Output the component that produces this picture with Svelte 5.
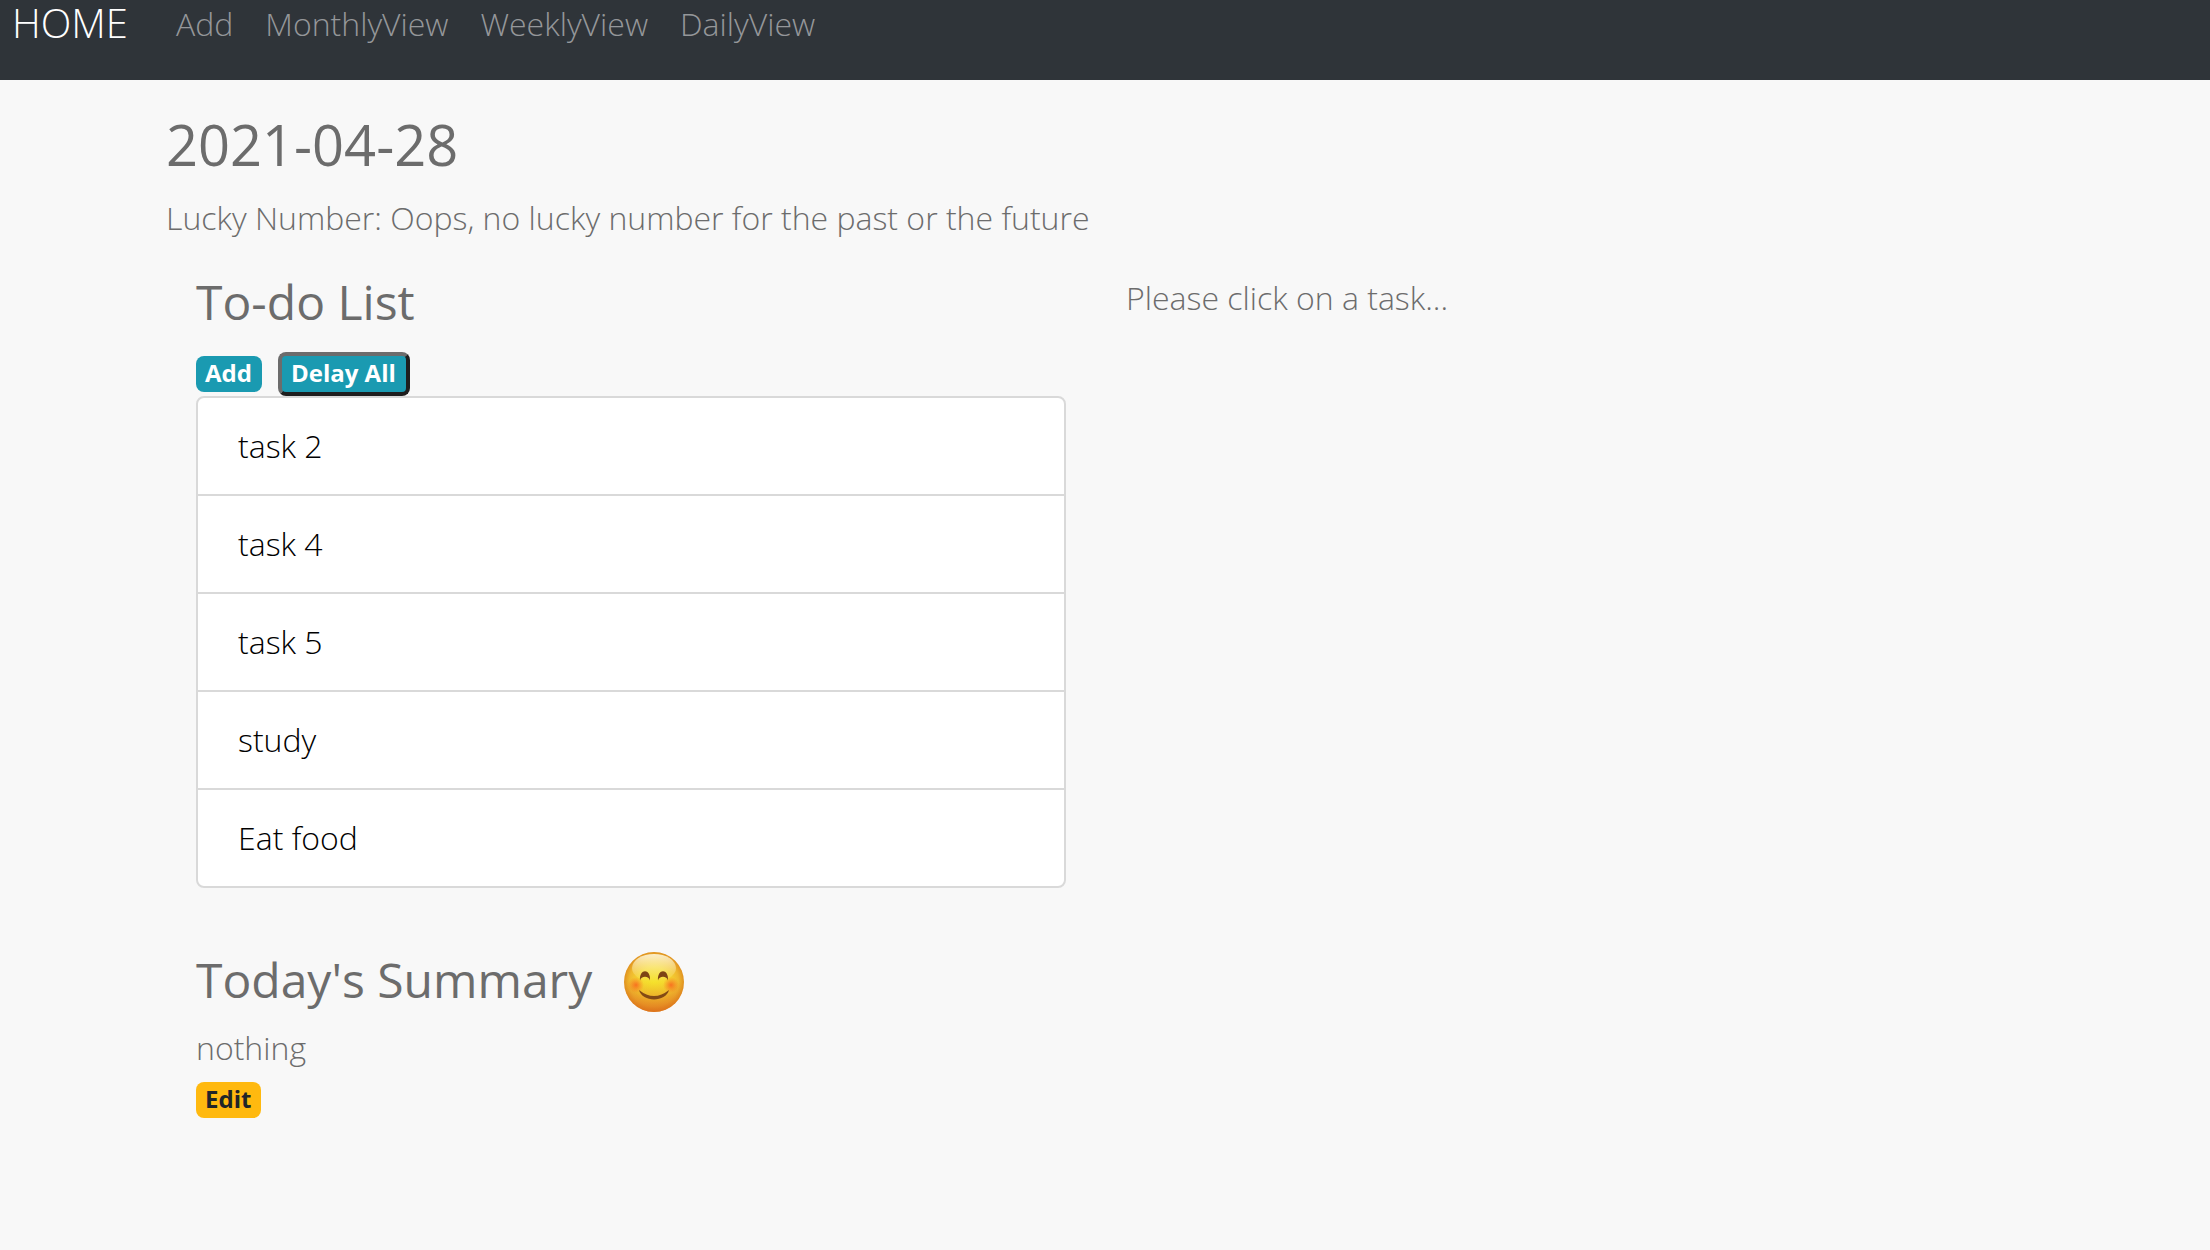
<script>
  const links = ['Add', 'MonthlyView', 'WeeklyView', 'DailyView'];
  const tasks = ['task 2', 'task 4', 'task 5', 'study', 'Eat food'];
</script>

<nav class="navbar">
  <a class="brand" href="#home">HOME</a>
  {#each links as link}
    <a class="nav-link" href="#{link.toLowerCase()}">{link}</a>
  {/each}
</nav>

<main class="page">
  <h1>2021-04-28</h1>
  <p>Lucky Number: Oops, no lucky number for the past or the future</p>

  <div class="row">
    <section class="col">
      <h2>To-do List</h2>
      <div class="actions">
        <a class="badge info" href="#add-task">Add</a>
        <button class="badge info raised" type="button">Delay All</button>
      </div>
      <ul class="tasks">
        {#each tasks as task}
          <li><a href="#task">{task}</a></li>
        {/each}
      </ul>

      <div class="summary-head">
        <h2>Today's Summary</h2>
        <svg class="mood" viewBox="0 0 60 60" role="img" aria-label="smiling face">
          <defs>
            <radialGradient id="face" cx="0.5" cy="0.5" r="0.5">
              <stop offset="0" stop-color="#f5e22c" />
              <stop offset="0.5" stop-color="#f5d731" />
              <stop offset="0.82" stop-color="#efb82f" />
              <stop offset="1" stop-color="#e0921f" />
            </radialGradient>
            <linearGradient id="shade" x1="0" y1="0" x2="0" y2="1">
              <stop offset="0.5" stop-color="#e0701a" stop-opacity="0" />
              <stop offset="1" stop-color="#dc641a" stop-opacity="0.7" />
            </linearGradient>
            <linearGradient id="gloss" x1="0" y1="0" x2="0" y2="1">
              <stop offset="0" stop-color="#fffbe6" stop-opacity="0.85" />
              <stop offset="1" stop-color="#fff6b0" stop-opacity="0" />
            </linearGradient>
            <radialGradient id="blush">
              <stop offset="0" stop-color="#f9631d" stop-opacity="0.85" />
              <stop offset="1" stop-color="#f9701d" stop-opacity="0" />
            </radialGradient>
          </defs>
          <circle cx="30" cy="30" r="30" fill="url(#face)" />
          <circle cx="30" cy="30" r="30" fill="url(#shade)" />
          <ellipse cx="30" cy="16" rx="22" ry="14" fill="url(#gloss)" />
          <circle cx="12" cy="33" r="8" fill="url(#blush)" />
          <circle cx="47" cy="33" r="8" fill="url(#blush)" />
          <path d="M16 28.500C15 16 27 16 26 28.500C25 23.500 17 23.500 16 28.500Z" fill="#7d4415" />
          <path d="M34 28.500C33 16 45 16 44 28.500C43 23.500 35 23.500 34 28.500Z" fill="#7d4415" />
          <path d="M15 38Q30 50 45 38C42 50.500 18 50.500 15 38Z" fill="#834a15" />
        </svg>
      </div>
      <p>nothing</p>
      <button class="badge warning" type="button">Edit</button>
    </section>

    <section class="col">
      <p>Please click on a task...</p>
    </section>
  </div>
</main>

<style>
  :global(body) {
    margin: 0;
    background: #f8f8f8;
    color: #6c6c6c;
    font-family: 'Open Sans', sans-serif;
    font-size: 32px;
    font-weight: 300;
    line-height: 48px;
  }

  h1,
  h2,
  p,
  ul {
    margin: 0;
    padding: 0;
  }

  a {
    color: inherit;
    text-decoration: none;
  }

  .navbar {
    display: flex;
    box-sizing: border-box;
    height: 80px;
    padding: 0 12px;
    gap: 32px;
    background: #2f3439;
    color: #95979a;
  }

  .brand {
    margin-right: 16px;
    color: #fff;
    font-size: 40px;
    line-height: 46px;
  }

  .page {
    padding: 32px 184px 32px 166px;
  }

  h1 {
    margin-bottom: 18px;
    font-size: 56px;
    font-weight: 500;
    line-height: 64px;
  }

  h2 {
    font-size: 48px;
    font-weight: 500;
    line-height: 56px;
  }

  .row {
    display: grid;
    grid-template-columns: 1fr 1fr;
    margin-top: 32px;
  }

  .col {
    padding: 0 30px;
  }

  .actions {
    display: flex;
    align-items: center;
    gap: 16px;
    margin-top: 22px;
  }

  .badge {
    display: block;
    padding: 5px 10px 7px 9px;
    border: 0;
    border-radius: 8px;
    font-family: inherit;
    font-size: 24px;
    font-weight: 700;
    line-height: 24px;
  }

  .info {
    background: #1a9ab1;
    color: #fff;
  }

  .raised {
    border: 4px solid;
    border-color: #6c6c6c #1e1e1e #1e1e1e #6c6c6c;
  }

  .warning {
    margin-top: 10px;
    background: #ffb90f;
    color: #212529;
  }

  .tasks {
    border: 2px solid #d9d9d9;
    border-radius: 8px;
    background: #fff;
    color: #000;
    list-style: none;
  }

  .tasks li {
    padding: 24px 40px;
  }

  .tasks li + li {
    border-top: 2px solid #d9d9d9;
  }

  .summary-head {
    display: flex;
    gap: 32px;
    margin-top: 64px;
    margin-bottom: 12px;
  }

  .mood {
    width: 60px;
    height: 60px;
  }
</style>
